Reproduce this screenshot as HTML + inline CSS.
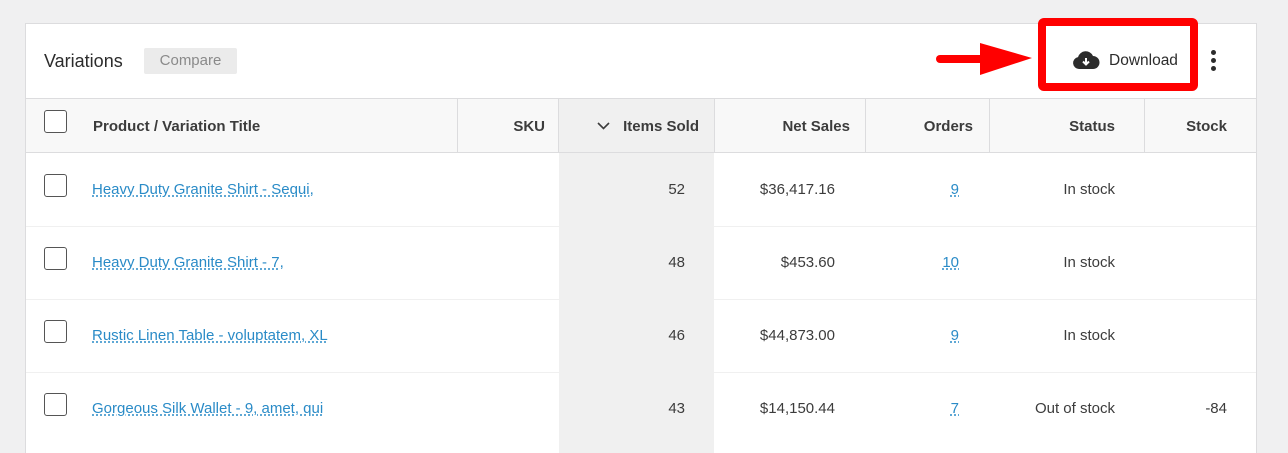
<!DOCTYPE html>
<html><head><meta charset="utf-8"><style>
*{margin:0;padding:0;box-sizing:border-box}
html,body{width:1288px;height:453px;overflow:hidden}
body{background:#f0f0f1;font-family:"Liberation Sans",Arial,sans-serif;position:relative;color:#1e1e1e}
.card{position:absolute;left:25px;top:23px;width:1232px;height:431px;background:#fff;border:1px solid #dcdcde;border-bottom:none;overflow:hidden}
.a{position:absolute;white-space:nowrap}
.hdr{position:absolute;left:0;top:74px;width:1230px;height:55px;background:#f8f8f8;border-top:1px solid #dcdcde;border-bottom:1px solid #dcdcde}
.vl{position:absolute;top:74px;height:55px;width:1px;background:#dcdcde}
.th{position:absolute;top:94px;font-size:15px;font-weight:bold;color:#3c3c3c}
.cb{position:absolute;width:23px;height:23px;border:1.5px solid #555;border-radius:3px;background:#fff}
.rl{position:absolute;left:0;width:1230px;height:1px;background:#f0f0f0}
.td{position:absolute;font-size:15px;color:#3c3c3c}
a{color:#2a8bc7;text-decoration:underline dotted;text-underline-offset:2px}
</style></head><body>
<div class="card">
  <div class="a" style="left:18px;top:27px;font-size:18px;color:#2c2c2c">Variations</div>
  <div class="a" style="left:118px;top:24px;width:93px;height:26px;background:#ebebeb;border-radius:2px;font-size:15px;color:#8a8a8a;text-align:center;line-height:26px">Compare</div>
  <svg class="a" style="left:1046px;top:26px" width="28" height="20" viewBox="0 0 28 20"><path d="M7 19a6 6 0 0 1-1-11.9A8 8 0 0 1 21 6a6.5 6.5 0 0 1 0 13z" fill="#2c2c2c"/><path d="M14 8v6M11 11.5l3 3 3-3" stroke="#fff" stroke-width="2" fill="none"/></svg>
  <div class="a" style="left:1083px;top:28px;font-size:15.5px;color:#2c2c2c">Download</div>
  <div class="a" style="left:1185px;top:26px;width:5px;height:5px;border-radius:50%;background:#2c2c2c"></div>
  <div class="a" style="left:1185px;top:34px;width:5px;height:5px;border-radius:50%;background:#2c2c2c"></div>
  <div class="a" style="left:1185px;top:42px;width:5px;height:5px;border-radius:50%;background:#2c2c2c"></div>
  <div class="hdr"></div>
  <div class="a" style="left:533px;top:75px;width:155px;height:370px;background:#f0f0f0"></div>
  <div class="vl" style="left:431px"></div><div class="vl" style="left:532px"></div><div class="vl" style="left:688px"></div><div class="vl" style="left:839px"></div><div class="vl" style="left:963px"></div><div class="vl" style="left:1118px"></div>
  <div class="a" style="left:0;top:128px;width:1230px;height:1px;background:#dcdcde"></div>
  <div class="cb" style="left:18px;top:86px"></div>
  <div class="th" style="left:67px">Product / Variation Title</div>
  <div class="th" style="right:711px">SKU</div>
  <svg class="a" style="left:571px;top:98px" width="13" height="8"><path d="M1 1l5.5 5.5 5.5-5.5" stroke="#3c3c3c" stroke-width="1.6" fill="none"/></svg>
  <div class="th" style="right:557px">Items Sold</div>
  <div class="th" style="right:406px">Net Sales</div>
  <div class="th" style="right:283px">Orders</div>
  <div class="th" style="right:141px">Status</div>
  <div class="th" style="right:29px">Stock</div>
  <div class="rl" style="top:202px"></div><div class="rl" style="top:275px"></div><div class="rl" style="top:348px"></div>

  <div class="cb" style="left:18px;top:150px"></div>
  <div class="td" style="left:66px;top:157px"><a>Heavy Duty Granite Shirt - Sequi,</a></div>
  <div class="td" style="right:571px;top:157px">52</div>
  <div class="td" style="right:421px;top:157px">$36,417.16</div>
  <div class="td" style="right:297px;top:157px"><a>9</a></div>
  <div class="td" style="right:141px;top:157px">In stock</div>

  <div class="cb" style="left:18px;top:223px"></div>
  <div class="td" style="left:66px;top:230px"><a>Heavy Duty Granite Shirt - 7,</a></div>
  <div class="td" style="right:571px;top:230px">48</div>
  <div class="td" style="right:421px;top:230px">$453.60</div>
  <div class="td" style="right:297px;top:230px"><a>10</a></div>
  <div class="td" style="right:141px;top:230px">In stock</div>

  <div class="cb" style="left:18px;top:296px"></div>
  <div class="td" style="left:66px;top:303px"><a>Rustic Linen Table - voluptatem, XL</a></div>
  <div class="td" style="right:571px;top:303px">46</div>
  <div class="td" style="right:421px;top:303px">$44,873.00</div>
  <div class="td" style="right:297px;top:303px"><a>9</a></div>
  <div class="td" style="right:141px;top:303px">In stock</div>

  <div class="cb" style="left:18px;top:369px"></div>
  <div class="td" style="left:66px;top:376px"><a>Gorgeous Silk Wallet - 9, amet, qui</a></div>
  <div class="td" style="right:571px;top:376px">43</div>
  <div class="td" style="right:421px;top:376px">$14,150.44</div>
  <div class="td" style="right:297px;top:376px"><a>7</a></div>
  <div class="td" style="right:141px;top:376px">Out of stock</div>
  <div class="td" style="right:29px;top:376px">-84</div>
</div>
<div class="a" style="left:1038px;top:18px;width:160px;height:73px;border:8px solid #f00;border-radius:6px"></div>
<svg class="a" style="left:930px;top:40px" width="105" height="40"><line x1="10" y1="19" x2="62" y2="19" stroke="#f00" stroke-width="8" stroke-linecap="round"/><polygon points="50,3 102,18 50,35" fill="#f00"/></svg>
</body></html>
